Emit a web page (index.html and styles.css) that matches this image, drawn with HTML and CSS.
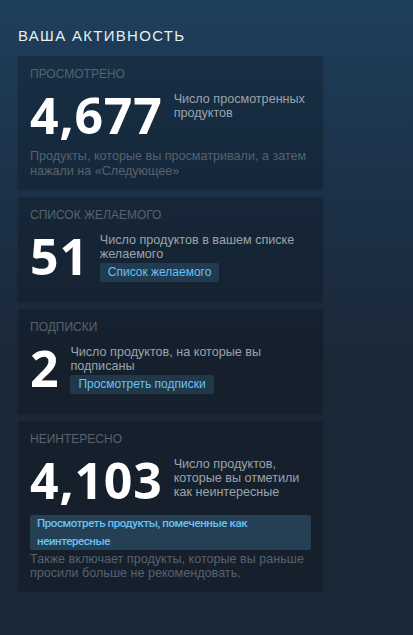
FILE: index.html
```html
<!DOCTYPE html>
<html lang="ru">
<head>
<meta charset="utf-8">
<title>Ваша активность</title>
<link rel="stylesheet" href="styles.css">
</head>
<body>
<div class="page">
  <h2 class="title">ВАША АКТИВНОСТЬ</h2>

  <div class="card card-1">
    <div class="label">ПРОСМОТРЕНО</div>
    <div class="row">
      <div class="num">4,677</div>
      <div class="side">
        <div class="desc">Число просмотренных продуктов</div>
      </div>
    </div>
    <div class="foot foot-1">Продукты, которые вы просматривали, а затем нажали на «Следующее»</div>
  </div>

  <div class="card">
    <div class="label">СПИСОК ЖЕЛАЕМОГО</div>
    <div class="row row-end">
      <div class="num">51</div>
      <div class="side">
        <div class="desc">Число продуктов в вашем списке желаемого</div>
        <a class="btn">Список желаемого</a>
      </div>
    </div>
  </div>

  <div class="card">
    <div class="label">ПОДПИСКИ</div>
    <div class="row row-end">
      <div class="num">2</div>
      <div class="side">
        <div class="desc">Число продуктов, на которые вы подписаны</div>
        <a class="btn">Просмотреть подписки</a>
      </div>
    </div>
  </div>

  <div class="card card-4">
    <div class="label">НЕИНТЕРЕСНО</div>
    <div class="row">
      <div class="num">4,103</div>
      <div class="side">
        <div class="desc desc-3">Число продуктов, которые вы отметили как неинтересные</div>
      </div>
    </div>
    <a class="wide-btn">Просмотреть продукты, помеченные как неинтересные</a>
    <div class="foot foot-2">Также включает продукты, которые вы раньше просили больше не рекомендовать.</div>
  </div>
</div>
</body>
</html>
```

FILE: styles.css
```css
html, body {
  margin: 0;
  padding: 0;
}

body {
  width: 413px;
  height: 635px;
  overflow: hidden;
  background: linear-gradient(to bottom, #1e3f5c 0px, #1c3249 180px, #1b2838 360px, #1b2838 635px);
  font-family: "Liberation Sans", Arial, sans-serif;
}

.page {
  padding: 27px 18px 0;
}

.title {
  margin: 0 0 11px;
  font-family: "Liberation Sans", Arial, sans-serif;
  font-weight: 400;
  font-size: 15px;
  line-height: 18px;
  letter-spacing: 1.3px;
  color: #e6eef5;
}

.card {
  width: 305px;
  box-sizing: border-box;
  padding: 11px 12px 8px;
  margin-bottom: 7px;
  background: rgba(0, 0, 0, 0.2);
  box-shadow: 0 1px 2px rgba(0, 0, 0, 0.15);
}

.card-1 {
  padding-bottom: 10px;
  margin-bottom: 8px;
}

.card-4 {
  padding-bottom: 11px;
}

.label {
  font-size: 12px;
  line-height: 14px;
  color: #56626e;
  margin-bottom: 9px;
}

.row {
  display: flex;
  align-items: flex-start;
  gap: 11px;
}

.row-end {
  margin-bottom: 12px;
}

.num {
  flex: none;
  font-family: "Open Sans", sans-serif;
  font-weight: 700;
  font-size: 50px;
  line-height: 50px;
  letter-spacing: 0.8px;
  color: #ffffff;
}

.side {
  flex: 1;
  min-width: 0;
  padding-top: 2px;
  display: flex;
  flex-direction: column;
  align-items: flex-start;
}

.desc {
  font-size: 12.6px;
  line-height: 14px;
  color: #9ba4ac;
}

.btn {
  display: inline-block;
  margin-top: 2px;
  padding: 0 8px;
  font-size: 12px;
  line-height: 19px;
  color: #67c1f5;
  background: rgba(103, 193, 245, 0.15);
  border-radius: 2px;
}

.wide-btn {
  display: block;
  margin-top: 10px;
  padding: 0 7px;
  font-family: Roboto, "Liberation Sans", sans-serif;
  font-size: 11.5px;
  font-weight: 500;
  letter-spacing: -0.4px;
  line-height: 17.5px;
  color: #67c1f5;
  background: rgba(103, 193, 245, 0.2);
  border-radius: 2px;
}

.foot {
  font-size: 12.6px;
  line-height: 15px;
  color: #56626e;
}

.foot-1 {
  margin-top: 9px;
}

.foot-2 {
  margin-top: 3px;
  line-height: 13.5px;
}
```
